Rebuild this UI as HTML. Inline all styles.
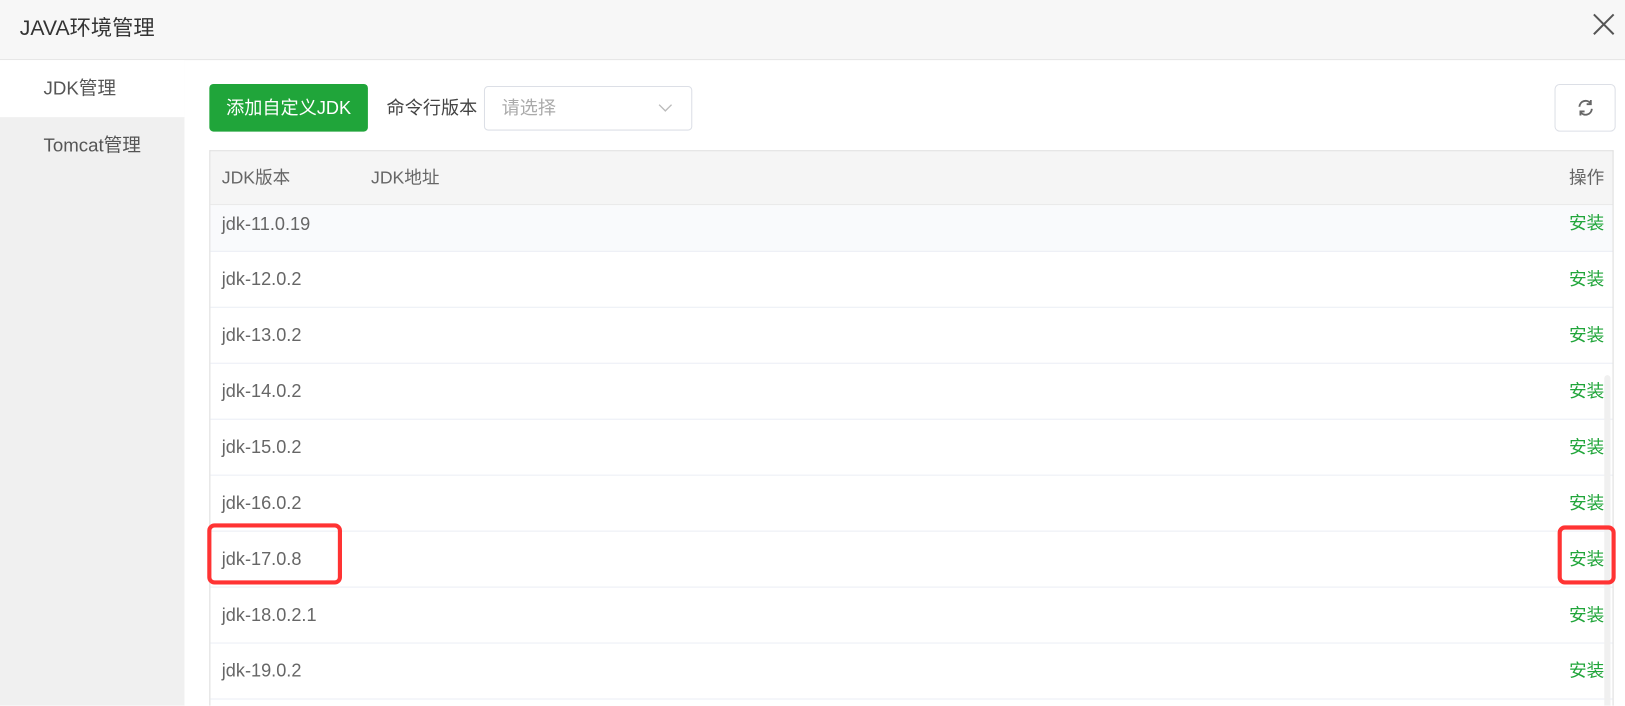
<!DOCTYPE html>
<html><head><meta charset="utf-8"><style>
*{margin:0;padding:0;box-sizing:border-box}
body{width:1625px;height:706px;overflow:hidden;background:#fff;font-family:"Liberation Sans","Noto Sans CJK SC",sans-serif;color:#666}
#w{position:absolute;left:0;top:0;width:1568px;height:681px;overflow:hidden;transform:scale(1.03635);transform-origin:0 0}
.hdr{position:absolute;left:0;top:0;width:1568px;height:58px;background:#f7f7f7;border-bottom:1px solid #e6e6e6}
.hdr .t{position:absolute;left:19px;top:0;line-height:56px;font-size:20.5px;color:#333}
.side{position:absolute;left:0;top:58px;width:178px;height:623px;background:#f0f0f0}
.side div{height:55px;line-height:55px;padding-left:42px;font-size:18px;color:#555}
.side .a{background:#fff}
.btn{position:absolute;left:202px;top:81px;width:153px;height:46px;background:#20a53a;border-radius:4px;color:#fff;font-size:17.5px;line-height:46px;text-align:center}
.lbl{position:absolute;left:373px;top:81px;line-height:46px;font-size:17.5px;color:#444}
.sel{position:absolute;left:467px;top:83px;width:201px;height:43px;border:1px solid #dcdfe6;border-radius:4px;font-size:17.5px;color:#aaa;line-height:41px;padding-left:16px}
.sel svg{position:absolute;right:18px;top:16px}
.ref{position:absolute;left:1500px;top:81px;width:59px;height:46px;border:1px solid #dcdfe6;border-radius:5px}
.tbl{position:absolute;left:202px;top:145px;width:1355px;height:536px;border:1px solid #ddd;border-bottom:none;overflow:hidden}
.th{height:52px;background:#f5f5f5;border-bottom:1px solid #e8e8e8;position:relative;font-size:17px;line-height:51px}
.th span{position:absolute;top:0}
.r{height:54px;border-bottom:1px solid #ebeef5;position:relative;font-size:17.5px;line-height:53px}
.r .n{position:absolute;left:11px;top:0;color:#666}
.r .o{position:absolute;right:8px;top:0;color:#20a53a;font-size:17px}
.box{position:absolute;border:4px solid #f33;border-radius:7px}
</style></head><body><div id="w">
<div class="hdr"><div class="t">JAVA环境管理</div>
<svg style="position:absolute;left:1537px;top:13px" width="21" height="21" viewBox="0 0 22 22"><path d="M1 1L21 21M21 1L1 21" stroke="#555" stroke-width="2"/></svg></div>
<div class="side"><div class="a">JDK管理</div><div>Tomcat管理</div></div>
<div class="btn">添加自定义JDK</div>
<div class="lbl">命令行版本</div>
<div class="sel">请选择<svg width="14" height="9" viewBox="0 0 14 9"><path d="M1 1L7 7L13 1" stroke="#bbb" stroke-width="1.3" fill="none"/></svg></div>
<div class="ref"><svg style="position:absolute;left:20px;top:13px" width="18" height="18" viewBox="0 0 18 18" fill="none" stroke="#666" stroke-width="1.8"><path d="M3 8A6 6 0 0 1 14 5"/><path d="M14 1.5V5.5H10"/><path d="M15 10A6 6 0 0 1 4 13"/><path d="M4 16.5V12.5H8"/></svg></div>
<div class="tbl">
<div class="th"><span style="left:11px">JDK版本</span><span style="left:155px">JDK地址</span><span style="right:8px">操作</span></div>
<div class="r" style="height:45px;background:#f9fafc;line-height:36px"><span class="n">jdk-11.0.19</span><span class="o">安装</span></div>
<div class="r"><span class="n">jdk-12.0.2</span><span class="o">安装</span></div>
<div class="r"><span class="n">jdk-13.0.2</span><span class="o">安装</span></div>
<div class="r"><span class="n">jdk-14.0.2</span><span class="o">安装</span></div>
<div class="r"><span class="n">jdk-15.0.2</span><span class="o">安装</span></div>
<div class="r"><span class="n">jdk-16.0.2</span><span class="o">安装</span></div>
<div class="r"><span class="n">jdk-17.0.8</span><span class="o">安装</span></div>
<div class="r"><span class="n">jdk-18.0.2.1</span><span class="o">安装</span></div>
<div class="r"><span class="n">jdk-19.0.2</span><span class="o">安装</span></div>
<div class="r" style="height:14px"></div>
</div>
<div style="position:absolute;left:1548px;top:362px;width:6px;height:319px;background:#f0f0f0;border-radius:3px 3px 0 0"></div>
<div class="box" style="left:200px;top:505px;width:130px;height:59px"></div>
<div class="box" style="left:1503px;top:507px;width:56px;height:57px"></div>
</div></body></html>
